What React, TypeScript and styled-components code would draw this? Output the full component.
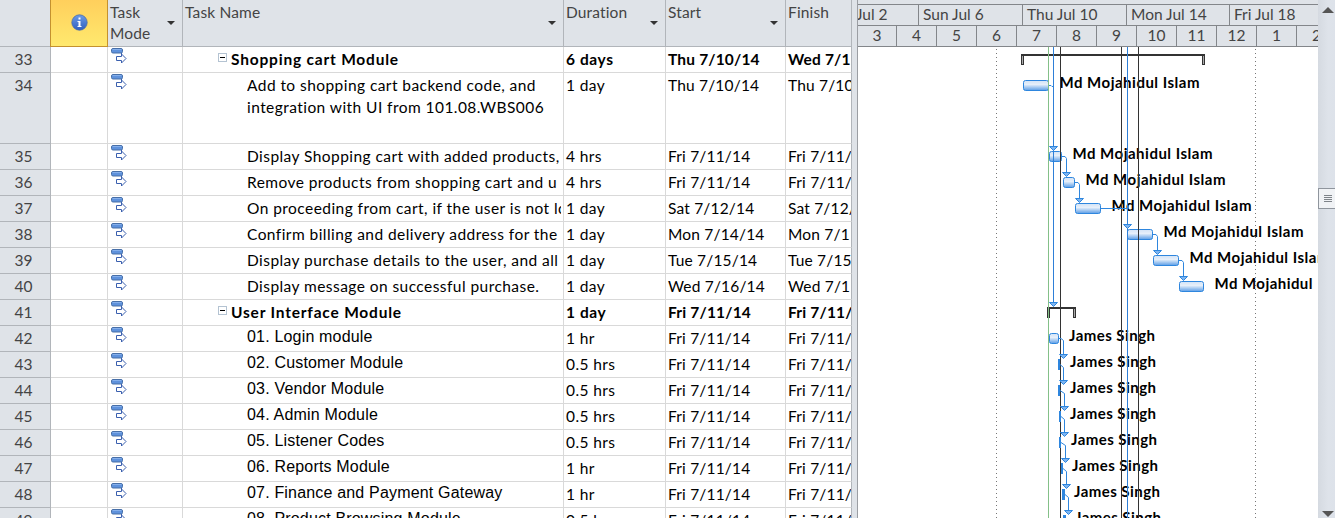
import React from 'react';
import styled, { createGlobalStyle, css } from 'styled-components';

const GlobalStyle = createGlobalStyle`
  * { box-sizing: border-box; }
  body { margin: 0; background: #fff; overflow: hidden; }
`;

const line = '#b1b5ba';
const grid = '#d9d9d9';
const chrome = '#dfe3e8';
const tableColumns = '51px 57px 75px 381px 102px 120px 66px';

const Window = styled.div`
  display: flex;
  width: 1335px;
  height: 518px;
  overflow: hidden;
  font-family: Lato, Carlito, Calibri, sans-serif;
  font-size: 15.5px;
  font-kerning: normal;
  color: #000;
`;

const Sheet = styled.div`
  width: 852px;
  flex: none;
  overflow: hidden;
`;

const HeaderRow = styled.div`
  display: grid;
  grid-template-columns: ${tableColumns};
  height: 47px;
`;

const HeaderCell = styled.div`
  display: flex;
  justify-content: space-between;
  background: ${chrome};
  border-right: 1px solid ${line};
  border-bottom: 1px solid ${line};
  color: #444;
  letter-spacing: 0.15px;
  line-height: 21px;
  padding: 2px 7px 0 2px;
  white-space: pre-line;
`;

const InfoHeader = styled(HeaderCell)`
  justify-content: center;
  padding: 14px 0 0;
  margin-left: -1px;
  background: linear-gradient(#ffcf5c, #ffe96e);
  border: 1px solid #c4912f;
  border-top: 0;
`;

const Caret = styled.i`
  flex: none;
  align-self: flex-start;
  margin-top: 19px;
  border: 4px solid transparent;
  border-top-color: #333;
  border-bottom: 0;
`;

const Row = styled.div<{ $tall?: boolean }>`
  display: grid;
  grid-template-columns: ${tableColumns};
  height: ${p => (p.$tall ? 71 : 26)}px;
`;

const Cell = styled.div<{ $bold?: boolean }>`
  overflow: hidden;
  border-right: 1px solid ${grid};
  border-bottom: 1px solid ${grid};
  padding: 1px 0 0 2px;
  line-height: 22px;
  letter-spacing: 0.18px;
  white-space: nowrap;
  font-weight: ${p => (p.$bold ? 700 : 400)};
`;

const DurationCell = styled(Cell)`
  letter-spacing: ${p => (p.$bold ? 0.6 : 0.4)}px;
`;

const LastCell = styled(Cell)`
  border-right-color: ${line};
`;

const NumberCell = styled(Cell)`
  background: ${chrome};
  border-color: ${line};
  color: #444;
  text-align: center;
  letter-spacing: 0;
  padding: 1px 3px 0 0;
`;

const ModeCell = styled(Cell)`
  padding: 1px 0 0 3px;
  line-height: 0;
`;

const NameCell = styled(Cell)<{ $arial?: boolean }>`
  display: flex;
  padding-left: ${p => (p.$bold ? 35 : 64)}px;
  letter-spacing: ${p => (p.$bold ? 0.8 : 0.44)}px;
  ${p => p.$arial && css`
    font-family: 'Liberation Sans', Arial, sans-serif;
    font-size: 16px;
    letter-spacing: 0.18px;
    padding-top: 0;
  `}
`;

const NameText = styled.div`
  overflow: hidden;
  white-space: pre;
  margin-right: 2px;
`;

const Toggle = styled.span`
  flex: none;
  display: flex;
  align-items: center;
  justify-content: center;
  width: 9px;
  height: 9px;
  margin: 5px 4px 0 0;
  border: 1px solid #b4c3d2;
  &::before { content: ''; width: 5px; height: 1px; background: #000; }
`;

const Splitter = styled.div`
  flex: none;
  width: 6px;
  background: ${chrome};
  border-right: 1px solid #9b9ea3;
`;

const Timeline = styled.div`
  flex: none;
  width: 460px;
  overflow: hidden;
`;

const Scale = styled.div`
  height: 47px;
  padding-top: 4px;
  background: ${chrome};
  color: #444;
`;

const Tier = styled.div`
  display: flex;
  height: 21px;
  border-top: 1px solid #83868a;
`;

const LowerTier = styled(Tier)`
  height: 22px;
  border-bottom: 1px solid #83868a;
`;

const Tick = styled.div<{ $width: number; $center?: boolean; $shift?: number }>`
  flex: none;
  width: ${p => p.$width}px;
  border-right: 1px solid #83868a;
  padding-left: ${p => (p.$center ? 0 : 4)}px;
  text-align: ${p => (p.$center ? 'center' : 'left')};
  text-indent: ${p => p.$shift || 0}px;
  line-height: 19px;
  white-space: nowrap;
  overflow: hidden;
`;

const Chart = styled.svg`
  display: block;
  text { font-weight: 700; font-size: 15px; }
`;

const Scrollbar = styled.div`
  display: flex;
  flex-direction: column;
  align-items: center;
  flex: none;
  width: 17px;
  padding-top: 7px;
  background: linear-gradient(90deg, #d5dae1, #dee3ea 60%, #dde2ea);
`;

const ScrollArrow = styled.i<{ $down?: boolean }>`
  flex: none;
  margin-left: 3px;
  border: 6px solid transparent;
  ${p => (p.$down
    ? css`margin-top: 302px; border-top-color: #555; border-bottom: 0;`
    : css`border-bottom-color: #555; border-top: 0;`)}
`;

const Thumb = styled.div`
  flex: none;
  display: flex;
  flex-direction: column;
  align-items: center;
  justify-content: center;
  gap: 1px;
  width: 17px;
  height: 21px;
  margin-top: 175px;
  padding-left: 2px;
  background: #f0f2f5;
  border: 1px solid #8f959d;
  border-right: 0;
  i { width: 8px; height: 1px; background: #7e8389; }
`;

type Task = { id: number; name: string; duration: string; start: string; finish: string; bold?: boolean; arial?: boolean; tall?: boolean };
const fri = { start: 'Fri 7/11/14', finish: 'Fri 7/11/' };
const tasks: Task[] = [
  { id: 33, name: 'Shopping cart Module', duration: '6 days', start: 'Thu 7/10/14', finish: 'Wed 7/1', bold: true },
  { id: 34, name: 'Add to shopping cart backend code, and\nintegration with UI from 101.08.WBS006', duration: '1 day', start: 'Thu 7/10/14', finish: 'Thu 7/10', tall: true },
  { id: 35, name: 'Display Shopping cart with added products,', duration: '4 hrs', ...fri },
  { id: 36, name: 'Remove products from shopping cart and u', duration: '4 hrs', ...fri },
  { id: 37, name: 'On proceeding from cart, if the user is not lo', duration: '1 day', start: 'Sat 7/12/14', finish: 'Sat 7/12/' },
  { id: 38, name: 'Confirm billing and delivery address for the', duration: '1 day', start: 'Mon 7/14/14', finish: 'Mon 7/1' },
  { id: 39, name: 'Display purchase details to the user, and all', duration: '1 day', start: 'Tue 7/15/14', finish: 'Tue 7/15' },
  { id: 40, name: 'Display message on successful purchase.', duration: '1 day', start: 'Wed 7/16/14', finish: 'Wed 7/1' },
  { id: 41, name: 'User Interface Module', duration: '1 day', ...fri, bold: true },
  { id: 42, name: '01. Login module', duration: '1 hr', ...fri, arial: true },
  { id: 43, name: '02. Customer Module', duration: '0.5 hrs', ...fri, arial: true },
  { id: 44, name: '03. Vendor Module', duration: '0.5 hrs', ...fri, arial: true },
  { id: 45, name: '04. Admin Module', duration: '0.5 hrs', ...fri, arial: true },
  { id: 46, name: '05. Listener Codes', duration: '0.5 hrs', ...fri, arial: true },
  { id: 47, name: '06. Reports Module', duration: '1 hr', ...fri, arial: true },
  { id: 48, name: '07. Finance and Payment Gateway', duration: '1 hr', ...fri, arial: true },
  { id: 49, name: '08. Product Browsing Module', duration: '0.5 hrs', ...fri, arial: true },
];

const ModeIcon = () => (
  <svg width="16" height="16" viewBox="0 0 16 16">
    <rect x=".5" y=".5" width="11" height="4.500" rx="1.500" fill="#5f92dc" stroke="#476fa8" />
    <path d="M1.500 1.500h9" stroke="#86b0ec" />
    <path d="M10.500 5v3.500h-5v4h5V15l4.500-4.500L10.500 6" fill="#fff" stroke="#3a5fae" />
  </svg>
);

const InfoIcon = () => (
  <svg width="17" height="17" viewBox="0 0 17 17">
    <defs>
      <linearGradient id="info" x2="0" y2="1"><stop stopColor="#6b9be6" /><stop offset="1" stopColor="#315fbe" /></linearGradient>
    </defs>
    <circle cx="8.500" cy="8.500" r="7.700" fill="url(#info)" stroke="#4a6da8" strokeWidth=".8" />
    <path d="M7.500 3.500h2v2h-2zM6.500 7h3v5h1v1h-4v-1h1V8h-1z" fill="#fff" />
  </svg>
);

const bars = [
  [1023, 80, 26], [1049, 151, 13], [1063, 177, 12], [1075, 203, 26],
  [1127, 229, 26], [1153, 255, 26], [1179, 281, 25], [1049, 333, 10],
];
const slivers = [[1058, 359, 2], [1058, 385, 2], [1059, 411, 2], [1059, 437, 2], [1061, 463, 2], [1062, 489, 3], [1063, 515, 3]];
const links = [
  'M1049 85.500h2l1 1h1.500', 'M1062 156.500h3l1.500 2V172', 'M1075 182.500h3l1.500 2V198', 'M1101 208.500H1127',
  'M1153 234.500h3l1.500 2V250', 'M1179 260.500h3l1.500 2V276', 'M1059 338.500h2l2.500 2V354',
  'M1060 364.500l3.500 3V380', 'M1060 390.500l4.500 3V406', 'M1061 416.500l3.500 3V432', 'M1061 442.500l4.500 3V458',
  'M1063 468.500l3.500 3V484', 'M1065 494.500l3.500 3V510',
];
const arrows = [
  [1053, 146], [1066, 172], [1079, 198], [1127, 224], [1157, 250], [1183, 276], [1053, 302],
  [1063, 354], [1063, 380], [1064, 406], [1064, 432], [1065, 458], [1066, 484], [1068, 510],
];
const labels: [number, number, string, number][] = [
  [1059.5, 88, 'Md Mojahidul Islam', 140], [1072.5, 159, 'Md Mojahidul Islam', 140], [1085.5, 185, 'Md Mojahidul Islam', 140],
  [1111.5, 211, 'Md Mojahidul Islam', 140], [1163.5, 237, 'Md Mojahidul Islam', 140], [1189.5, 263, 'Md Mojahidul Islam', 140],
  [1214.5, 289, 'Md Mojahidul', 98], [1069, 341, 'James Singh', 86], [1070, 367, 'James Singh', 86], [1070, 393, 'James Singh', 86],
  [1070, 419, 'James Singh', 86], [1071, 445, 'James Singh', 86], [1072, 471, 'James Singh', 86], [1074, 497, 'James Singh', 86],
  [1075, 523, 'James Singh', 86],
];

const SummaryBar = ({ x, y, width }: { x: number; y: number; width: number }) => (
  <g>
    <rect x={x + 0.5} y={y + 0.5} width="2" height="10" fill="#aaa" stroke="#333" />
    <rect x={x + width - 2.5} y={y + 0.5} width="2" height="10" fill="#aaa" stroke="#333" />
    <rect x={x} y={y} width={width} height="2" fill="#333" />
  </g>
);

const Gantt = () => (
  <Chart width="460" height="471" viewBox="858 47 460 471">
    <defs>
      <linearGradient id="bar" x2="0" y2="1">
        <stop stopColor="#d3e3f6" /><stop offset=".4" stopColor="#e6effa" /><stop offset="1" stopColor="#5b9de6" />
      </linearGradient>
    </defs>
    <path d="M996.500 49V518M1255.500 49V518" stroke="#777" strokeDasharray="1 3" />
    <SummaryBar x={1021} y={54} width={184} />
    <SummaryBar x={1047} y={307} width={29} />
    {bars.map(([x, y, w]) => (
      <rect key={y} x={x + 0.5} y={y + 0.5} width={w - 1} height="10" rx="2" fill="url(#bar)" stroke="#2e86de" />
    ))}
    {labels.map(([x, y, text, w]) => (
      <text key={y} x={x} y={y} textLength={w}>{text}</text>
    ))}
    <path d="M1060.500 47V518M1121.500 47V518M1138.500 47V518" stroke="#333" />
    <path d="M1048.500 47V518" stroke="#84c088" />
    <path d="M1053.500 47V302M1127.500 47V518" stroke="#2e7fd8" />
    {slivers.map(([x, y, w]) => <rect key={y} x={x} y={y} width={w} height="11" fill="#2e86de" />)}
    {links.map(d => <path key={d} d={d} fill="none" stroke="#2e86de" />)}
    {arrows.map(([x, y]) => (
      <path key={y} d={`M${x - 3.5} ${y + 0.5}h8l-4 4z`} fill="#7db4f0" stroke="#2e86de" />
    ))}
  </Chart>
);

const upper: [string, number, number?][] = [['Jul 2', 61, -6], ['Sun Jul 6', 104], ['Thu Jul 10', 104], ['Mon Jul 14', 103], ['Fri Jul 18', 103]];
const lower: [string, number][] = [
  ['3', 39], ['4', 40], ['5', 40], ['6', 40], ['7', 40], ['8', 40], ['9', 40], ['10', 40], ['11', 40], ['12', 40], ['1', 40], ['2', 40],
];

export default function App() {
  return (
    <Window>
      <GlobalStyle />
      <Sheet>
        <HeaderRow>
          <HeaderCell />
          <InfoHeader><InfoIcon /></InfoHeader>
          <HeaderCell>{'Task\nMode'}<Caret /></HeaderCell>
          <HeaderCell>Task Name<Caret /></HeaderCell>
          <HeaderCell>Duration<Caret /></HeaderCell>
          <HeaderCell>Start<Caret /></HeaderCell>
          <HeaderCell>Finish</HeaderCell>
        </HeaderRow>
        {tasks.map(t => (
          <Row key={t.id} $tall={t.tall}>
            <NumberCell>{t.id}</NumberCell>
            <Cell />
            <ModeCell><ModeIcon /></ModeCell>
            <NameCell $bold={t.bold} $arial={t.arial}>
              {t.bold && <Toggle />}
              <NameText>{t.name}</NameText>
            </NameCell>
            <DurationCell $bold={t.bold}>{t.duration}</DurationCell>
            <Cell $bold={t.bold}>{t.start}</Cell>
            <LastCell $bold={t.bold}>{t.finish}</LastCell>
          </Row>
        ))}
      </Sheet>
      <Splitter />
      <Timeline>
        <Scale>
          <Tier>{upper.map(([label, w, s]) => <Tick key={label} $width={w} $shift={s}>{label}</Tick>)}</Tier>
          <LowerTier>{lower.map(([label, w]) => <Tick key={label} $width={w} $center>{label}</Tick>)}</LowerTier>
        </Scale>
        <Gantt />
      </Timeline>
      <Scrollbar>
        <ScrollArrow />
        <Thumb><i /><i /><i /><i /></Thumb>
        <ScrollArrow $down />
      </Scrollbar>
    </Window>
  );
}
